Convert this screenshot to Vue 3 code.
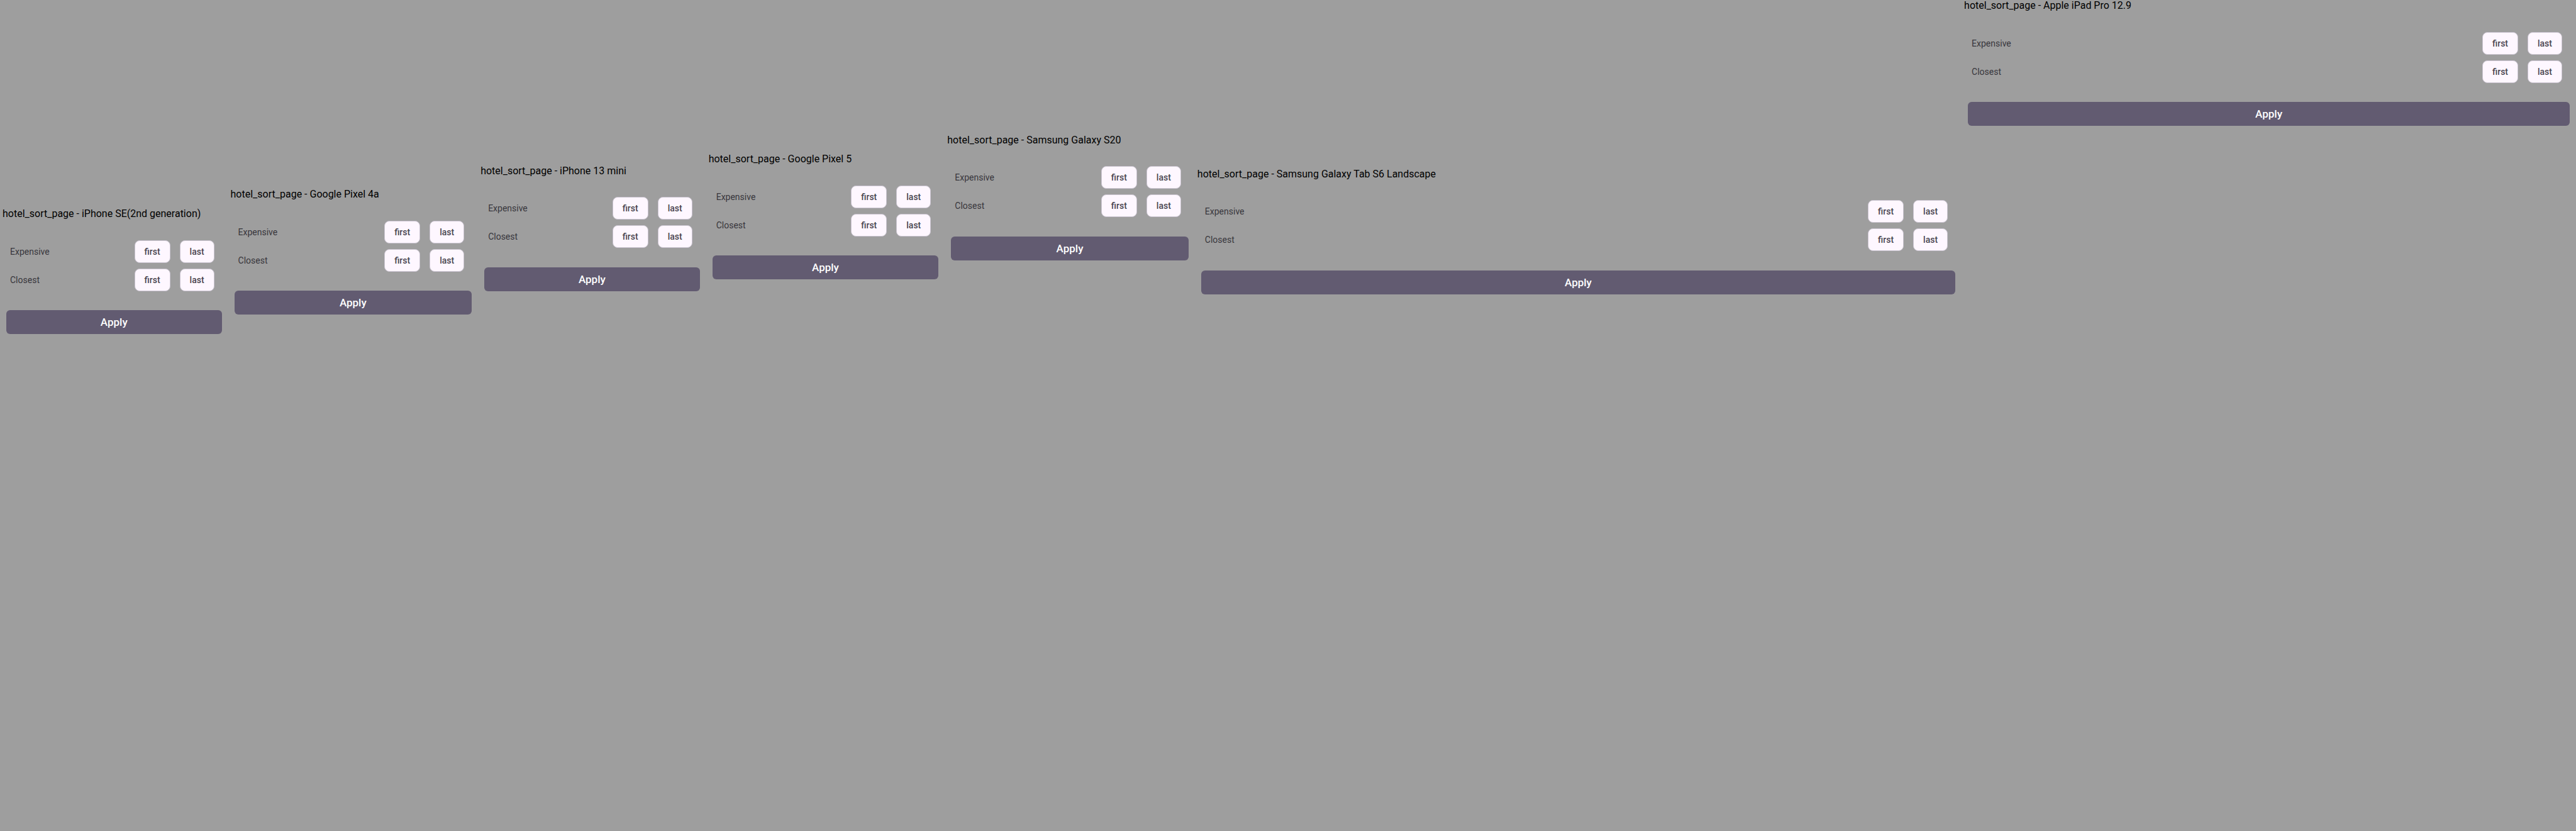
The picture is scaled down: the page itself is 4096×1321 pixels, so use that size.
<script setup>
const devices = [
  { name: 'iPhone SE(2nd generation)', width: 375, height: 667 },
  { name: 'Google Pixel 4a', width: 412, height: 732 },
  { name: 'iPhone 13 mini', width: 375, height: 812 },
  { name: 'Google Pixel 5', width: 393, height: 851 },
  { name: 'Samsung Galaxy S20', width: 412, height: 915 },
  { name: 'Samsung Galaxy Tab S6 Landscape', width: 1280, height: 800 },
  { name: 'Apple iPad Pro 12.9', width: 1024, height: 1366 },
]
const criteria = ['Expensive', 'Closest']
// each column takes its device width plus the gutter around it
const columns = devices.map((d) => `minmax(0, ${d.width + 8}fr)`).join(' ')
</script>

<template>
  <main class="board" :style="{ gridTemplateColumns: columns }">
    <section v-for="d in devices" :key="d.name" class="device">
      <h2 class="title">hotel_sort_page - {{ d.name }}</h2>
      <div class="screen" :style="{ aspectRatio: `${d.width} / ${d.height}` }">
        <div v-for="c in criteria" :key="c" class="row" role="group" :aria-label="c">
          <span class="label">{{ c }}</span>
          <div class="chips">
            <button type="button" class="chip">first</button>
            <button type="button" class="chip">last</button>
          </div>
        </div>
        <button type="button" class="apply">Apply</button>
      </div>
    </section>
  </main>
</template>

<style>
body {
  margin: 0;
  background: #9e9e9e;
}
</style>

<style scoped>
.board {
  display: grid;
  align-items: center;
  min-height: 100vh;
  font-family: Roboto, sans-serif;
}
.device {
  padding: 0 4px 8px;
}
.title {
  margin: 0 0 2px;
  font-size: 16px;
  font-weight: 400;
  line-height: 18px;
  color: #000;
  white-space: nowrap;
}
.screen {
  box-sizing: border-box;
  padding: 26px 6px 0;
}
.row {
  display: flex;
  align-items: center;
  justify-content: space-between;
  height: 45px;
  padding: 0 12px 0 6px;
}
.label {
  font-size: 14px;
  line-height: 20px;
  color: #38363c;
}
.chips {
  display: flex;
  gap: 15px;
}
.chip {
  height: 36px;
  padding: 0 15px;
  border: 1px solid #cac4d0;
  border-radius: 8px;
  background: #fef7ff;
  font: 500 14px/20px Roboto, sans-serif;
  color: #49454f;
}
.apply {
  display: block;
  width: 100%;
  height: 38px;
  margin-top: 26px;
  padding: 0;
  border: 0;
  border-radius: 6px;
  background: #625b71;
  font: 500 17px/24px Roboto, sans-serif;
  color: #fff;
}
</style>
